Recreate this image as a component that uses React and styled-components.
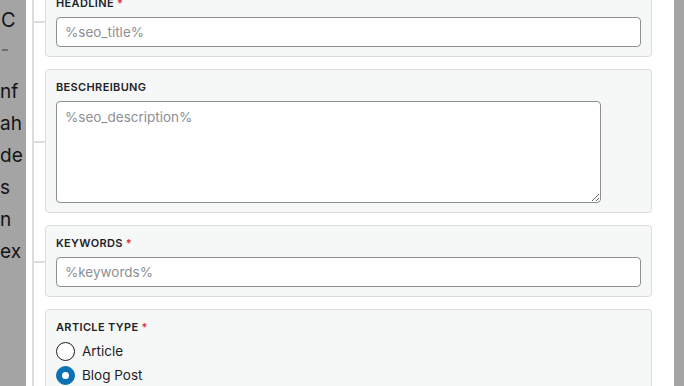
import React from 'react';
import styled, { createGlobalStyle } from 'styled-components';

const GlobalStyle = createGlobalStyle`
  html, body {
    margin: 0;
    padding: 0;
    background: #fff;
    overflow: hidden;
  }
  body {
    font-family: Inter, "Noto Sans", "Liberation Sans", sans-serif;
    width: 684px;
    height: 386px;
  }
`;

const Page = styled.div`
  width: 684px;
  height: 386px;
  display: flex;
  flex-direction: column;
  color: #1f2326;
  font-family: Inter, "Liberation Sans", sans-serif;
`;

const PageHeading = styled.div`
  height: 36px;
  padding: 2px 0 0 1px;
  display: flex;
  align-items: center;
  font-size: 20px;
  line-height: 36px;
`;

const PageRule = styled.div`
  width: 6px;
  height: 2px;
  margin: 11px 0 0 2px;
  background: #a8a8a8;
`;

const PageText = styled.div`
  display: flex;
  flex-direction: column;
  margin-top: 24px;
`;

const PageLine = styled.div`
  height: 32px;
  display: flex;
  align-items: center;
  white-space: nowrap;
  font-size: 19px;
`;

const Overlay = styled.div`
  position: fixed;
  inset: 0;
  background: rgba(0, 0, 0, 0.355);
`;

const Modal = styled.div`
  position: fixed;
  top: 0;
  bottom: 0;
  left: 26px;
  width: 648px;
  background: #fff;
  overflow: hidden;
  padding-left: 6px;
  box-sizing: border-box;
`;

const Tree = styled.div`
  display: flex;
  flex-direction: column;
  gap: 12px;
  margin-top: -15px;
  border-left: 2px solid #dcdcde;
  width: 620px;
  padding-bottom: 40px;
`;

const Row = styled.div`
  position: relative;
  padding-left: 11px;

  &::before {
    content: '';
    position: absolute;
    left: 0;
    top: 50%;
    width: 11px;
    height: 2px;
    background: #dcdcde;
  }
`;

const Card = styled.div`
  background: #f6f7f7;
  border: 1px solid #dcdcde;
  border-radius: 4px;
  padding: 10px 10px 9px 10px;
  width: 607px;
  box-sizing: border-box;
`;

const Label = styled.div`
  font-size: 11px;
  line-height: 14px;
  font-weight: 600;
  text-transform: uppercase;
  letter-spacing: 0.35px;
  color: #1d2327;
  margin-bottom: 7px;
`;

const Required = styled.span`
  color: #d63638;
  margin-left: 3px;
`;

const TextInput = styled.input`
  display: block;
  margin: 0;
  width: 100%;
  height: 30px;
  box-sizing: border-box;
  border: 1px solid #8c8f94;
  border-radius: 4px;
  background: #fff;
  padding: 0 8px;
  font-family: Inter, "Liberation Sans", sans-serif;
  font-size: 13.5px;
  color: #2c3338;
  outline: none;

  &::placeholder {
    color: #8c8f94;
  }
`;

const TextArea = styled.textarea`
  display: block;
  margin: 0;
  width: 545px;
  height: 102px;
  box-sizing: border-box;
  border: 1px solid #8c8f94;
  border-radius: 4px;
  background: #fff;
  padding: 5px 8px;
  font-family: Inter, "Liberation Sans", sans-serif;
  font-size: 13.5px;
  line-height: 20px;
  color: #2c3338;
  outline: none;

  &::placeholder {
    color: #8c8f94;
  }
`;

const RadioList = styled.div`
  display: flex;
  flex-direction: column;
  margin-top: -2px;
`;

const RadioRow = styled.label`
  display: flex;
  align-items: center;
  gap: 7px;
  height: 24px;
  font-size: 13.5px;
  color: #1e1e1e;
`;

const Radio = styled.input`
  appearance: none;
  margin: 0;
  width: 19px;
  height: 19px;
  border-radius: 50%;
  border: 1.5px solid #1e1e1e;
  background: #fff;
  box-sizing: border-box;
  display: grid;
  place-items: center;

  &:checked {
    background: #0a72b4;
    border-color: #0a72b4;
  }

  &:checked::after {
    content: '';
    width: 7px;
    height: 7px;
    border-radius: 50%;
    background: #fff;
  }
`;

const pageLines = ['nf', 'ah', 'de', 's', 'n', 'ex'];

const articleTypes = ['Article', 'Blog Post', 'News Article', 'Scholarly Article', 'Tech Article', 'Report'];

const App = () => {
  return (
    <>
      <GlobalStyle />
      <Page>
        <PageHeading>C</PageHeading>
        <PageRule />
        <PageText>
          {pageLines.map((line) => (
            <PageLine key={line}>{line}</PageLine>
          ))}
        </PageText>
      </Page>
      <Overlay />
      <Modal>
        <Tree>
          <Row>
            <Card>
              <Label>
                Headline<Required>*</Required>
              </Label>
              <TextInput placeholder="%seo_title%" />
            </Card>
          </Row>
          <Row>
            <Card>
              <Label>Beschreibung</Label>
              <TextArea placeholder="%seo_description%" />
            </Card>
          </Row>
          <Row>
            <Card>
              <Label>
                Keywords<Required>*</Required>
              </Label>
              <TextInput placeholder="%keywords%" />
            </Card>
          </Row>
          <Row>
            <Card>
              <Label>
                Article Type<Required>*</Required>
              </Label>
              <RadioList>
                {articleTypes.map((type) => (
                  <RadioRow key={type}>
                    <Radio type="radio" name="article-type" defaultChecked={type === 'Blog Post'} />
                    {type}
                  </RadioRow>
                ))}
              </RadioList>
            </Card>
          </Row>
        </Tree>
      </Modal>
    </>
  );
};

export default App;
